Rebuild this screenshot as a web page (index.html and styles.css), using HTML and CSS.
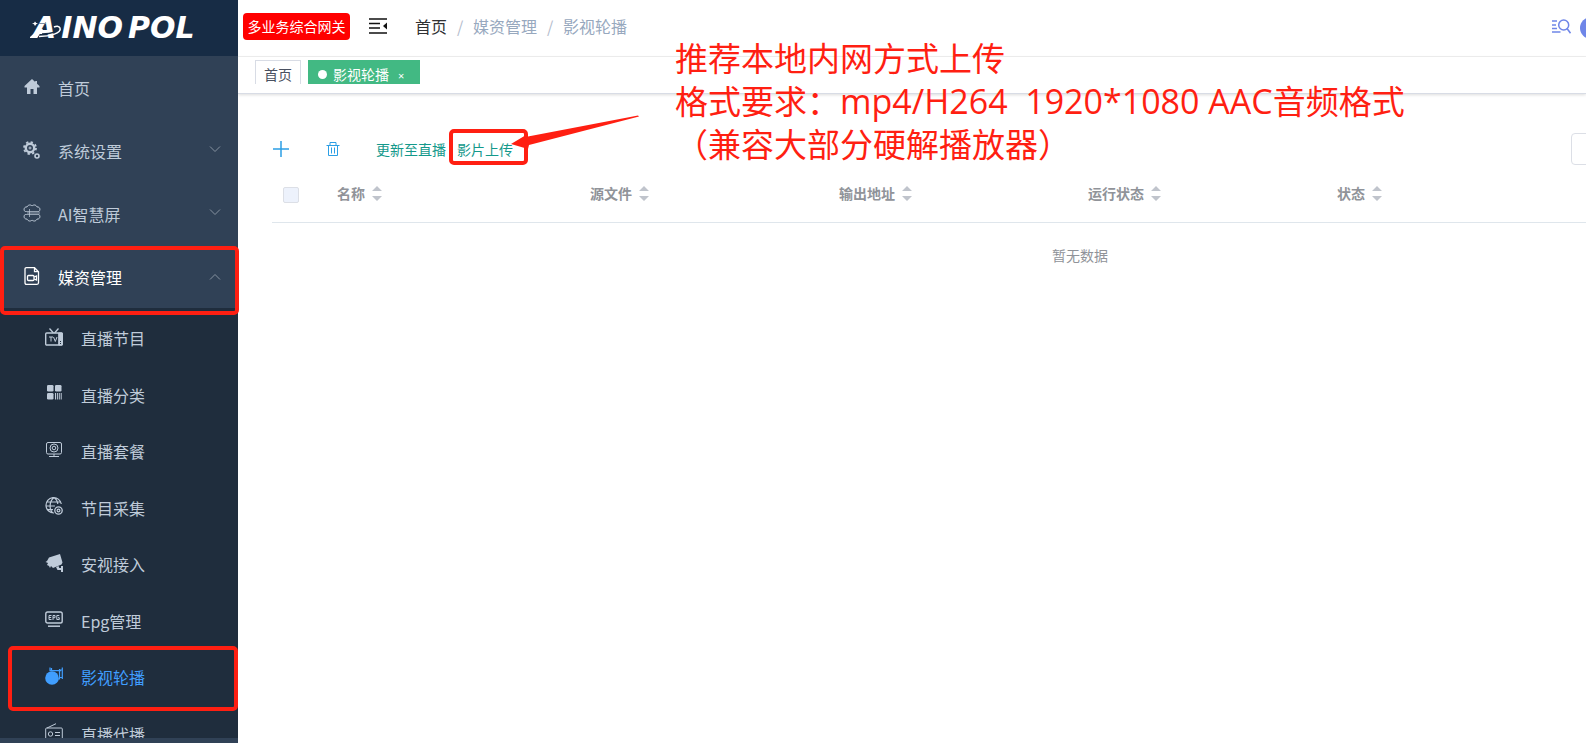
FILE: index.html
```html
<!DOCTYPE html>
<html lang="zh-CN">
<head>
<meta charset="utf-8">
<title>影视轮播</title>
<link rel="stylesheet" href="styles.css">
</head>
<body>
<div class="app">
  <aside class="sidebar">
    <div class="logo">
      <span>A</span><span>INO</span><span>POL</span>
      <svg class="logo-orbit" width="36" height="24" viewBox="0 0 36 24"><path d="M12 18C22 18 30 15 29 12" fill="none" stroke="#172c45" stroke-width="1.500"/><path d="M9 20.500C20 20.500 32 17 30 12C29 9.500 26 10 24 11" fill="none" stroke="#fff" stroke-width="1.500"/><path d="M5 5.500l1.200 1.500 1.800.5-1.800.7L5 10l-1-1.800-2-.7L4 7z" fill="#fff"/><path d="M9 7.500h7" stroke="#7f8fa3"/><path d="M-1 22L9 13h4l-6 9z" fill="#fff"/></svg>
    </div>
    <nav class="menu">
      <a class="item" href="#"><svg class="icon" viewBox="0 0 18 18"><path d="M9 1L1.500 8v1.500H4V16h3.500v-5h3v5H14V9.500h2.500V8L14 5.700V3h-1.800v1z" fill="currentColor"/></svg><span>首页</span></a>
      <a class="item" href="#"><svg class="icon" viewBox="0 0 18 18" fill="none" stroke="currentColor"><circle cx="7" cy="7" r="4.200" stroke-width="2.400"/><circle cx="7" cy="7" r="1"/><circle cx="7" cy="7" r="6" stroke-width="1.800" stroke-dasharray="2.350 2.350"/><circle cx="14" cy="15" r="2" stroke-width="1.600"/></svg><span>系统设置</span><svg class="chev" viewBox="0 0 12 8"><path d="M1 1.500l5 5 5-5"/></svg></a>
      <a class="item" href="#"><svg class="icon" viewBox="0 0 18 18" fill="none" stroke="currentColor"><path d="M2 7.500C0 5.500 1.500 2.500 4 3C5 .5 8 .5 9 2C10.500.5 13 .5 14 3C16.500 2.500 18 5.500 16 7.500M2 10.500C0 12.500 1.500 15.500 4 15C5 17.500 8 17.500 9 16C10.500 17.500 13 17.500 14 15C16.500 15.500 18 12.500 16 10.500"/><path d="M2 7.500h14M4 9h13M2 10.500h14M6.500 5v8" opacity=".7"/></svg><span>AI智慧屏</span><svg class="chev" viewBox="0 0 12 8"><path d="M1 1.500l5 5 5-5"/></svg></a>
      <a class="item open" href="#"><svg class="icon" viewBox="0 0 18 18" fill="none" stroke="currentColor" stroke-width="1.300"><path d="M3.500.7h8l4 4v11.100q0 1.500-1.500 1.500H3.500Q2 17.300 2 15.800V2.200Q2 .7 3.500.7zM11.500.7v4h4"/><rect x="4.500" y="8.500" width="6.500" height="5" rx="1"/><path d="M11 10l2.500-1v4L11 12"/></svg><span>媒资管理</span><svg class="chev" viewBox="0 0 12 8"><path d="M1 6.500l5-5 5 5"/></svg></a>
      <div class="submenu">
        <a class="item" href="#"><svg class="icon" viewBox="0 0 18 18" fill="none" stroke="currentColor"><path d="M4.500.5L8.500 5M13.500.5L9.500 5" stroke-width="1.300"/><rect x=".7" y="5" width="16.600" height="12" rx="1" stroke-width="1.400"/><path d="M13.700 5h3.600v12h-3.600z" fill="currentColor"/><path d="M4 9h4M6 9v4.500M8.500 9l1.800 4.500L12 9" stroke-width="1"/><path d="M15 13.500h1M15 15.500h1" stroke="#1f2d3d"/></svg><span>直播节目</span></a>
        <a class="item" href="#"><svg class="icon" viewBox="0 0 18 18" fill="currentColor"><rect x="2" y="1" width="6.500" height="6.500" rx="1.300"/><rect x="10" y="1" width="6.500" height="6.500" rx="1.300"/><rect x="2" y="9" width="6.500" height="6.500" rx="1.300"/><path d="M10 9h1v6.500h-1zm1.900 0h1v6.500h-1zm1.900 0h1v6.500h-1zm1.900 0h1v6.500h-1z"/></svg><span>直播分类</span></a>
        <a class="item" href="#"><svg class="icon" viewBox="0 0 18 18" fill="none" stroke="currentColor"><rect x="1.500" y="1.500" width="15" height="11.500" rx="1.500"/><circle cx="9" cy="7" r="4"/><circle cx="9" cy="7" r="1.800"/><path d="M9 13v2.500M4 15.500h10"/></svg><span>直播套餐</span></a>
        <a class="item" href="#"><svg class="icon" viewBox="0 0 18 18" fill="none" stroke="currentColor" stroke-width="1.200"><path d="M9 16A7.700 7.700 0 1 1 16.300 7M9 .7C4 4 4 13 8 16M9 .7c2.500 1.300 3.500 4 3.800 6.300M2 5h14M1 9h9M2 12.700h6"/><circle cx="13.500" cy="13.500" r="1.400"/><circle cx="13.500" cy="13.500" r="3.700" stroke-width="1.300"/></svg><span>节目采集</span></a>
        <a class="item" href="#"><svg class="icon" viewBox="0 0 18 18" fill="currentColor"><path d="M4 3.500L15 0l2.500 8.500-1 2L8 14 6 12l-1 2-1-2-2-1 1-2-2.500-1L2 7z"/><path d="M11 13l2.500-1 .8 2H16v-2h2v6h-2v-2h-3.500z"/></svg><span>安视接入</span></a>
        <a class="item" href="#"><svg class="icon" viewBox="0 0 18 18" fill="none" stroke="currentColor"><rect x=".8" y="2" width="16.400" height="11" rx="1.800" stroke-width="1.400"/><path d="M3 16.200h12" stroke-width="1.500"/><path d="M6.500 5.500H4v4h2.500M4 7.500h2.200M8 10V5.500h2v2.200H8M14.300 5.500h-2.500v4h2.500V7.700H13"/></svg><span>Epg管理</span></a>
        <a class="item current" href="#"><svg class="icon" viewBox="0 0 18 18" fill="none" stroke="currentColor" stroke-width="1.200"><circle cx="7" cy="11" r="6.800" fill="currentColor" stroke="none"/><path d="M5 4V.5M5 3.700h11M14.500 2v10H12M17.300 .5v11.500M14.500 3h2.500M14.500 10.500h2.500M6.500 1v3"/></svg><span>影视轮播</span></a>
        <a class="item" href="#"><svg class="icon" viewBox="0 0 18 18" fill="none" stroke="currentColor"><path d="M2 5L11 .7"/><rect x=".7" y="5" width="16.600" height="12" rx="1"/><circle cx="5.500" cy="11" r="2.200"/><path d="M10 9.500h5M10 12.500h5"/></svg><span>直播代播</span></a>
      </div>
    </nav>
    <div class="frame frame-menu"></div>
    <div class="frame frame-current"></div>
  </aside>

  <main class="main">
    <header class="topbar">
      <span class="badge">多业务综合网关</span>
      <button class="plain fold" aria-label="折叠菜单"><svg width="18" height="16" viewBox="0 0 18 16"><path d="M0 1h18M0 5.500h11M0 10h11M0 15h18" stroke="#111" stroke-width="1.700"/><path d="M18 4.500v7l-4-3.500z" fill="#111"/></svg></button>
      <nav class="crumbs"><a href="#">首页</a><i>/</i><span>媒资管理</span><i>/</i><span>影视轮播</span></nav>
      <button class="plain find" aria-label="搜索"><svg width="19" height="16" viewBox="0 0 19 16" fill="none" stroke="#6f86e8" stroke-width="1.500"><path d="M0 2h5M0 6h4M0 9.500h5M0 13h8.500"/><circle cx="11.700" cy="6" r="5"/><path d="M15 9.500l3.500 4.700"/></svg></button>
      <span class="avatar"></span>
    </header>
    <div class="tabs">
      <a class="tab" href="#">首页</a>
      <a class="tab active" href="#"><b class="dot"></b>影视轮播<small>×</small></a>
    </div>
    <section class="content">
      <div class="tools">
        <button class="plain add" aria-label="新增"><svg width="16" height="16" viewBox="0 0 16 16"><path d="M8 0v16M0 8h16" stroke="#2c9fe5" stroke-width="1.500"/></svg></button>
        <button class="plain del" aria-label="删除"><svg width="14" height="14" viewBox="0 0 14 14" fill="none" stroke="#2c9fe5"><path d="M.5 3.500h13M4 3V.5h6V3M2.500 3.500v10h9v-10M5.500 5.500v6M8.500 5.500v6"/></svg></button>
        <button class="plain link">更新至直播</button>
        <button class="plain link upload">影片上传</button>
        <button class="more" aria-label="更多"></button>
      </div>
      <table class="grid">
        <colgroup><col class="c-check"><col class="c-name"><col class="c-data"><col class="c-data"><col class="c-data"><col class="c-data"><col></colgroup>
        <thead><tr>
          <th><input type="checkbox" aria-label="全选"></th>
          <th>名称<svg class="sort" viewBox="0 0 10 16"><path d="M0 5l5-5 5 5zM0 10h10l-5 5z"/></svg></th>
          <th>源文件<svg class="sort" viewBox="0 0 10 16"><path d="M0 5l5-5 5 5zM0 10h10l-5 5z"/></svg></th>
          <th>输出地址<svg class="sort" viewBox="0 0 10 16"><path d="M0 5l5-5 5 5zM0 10h10l-5 5z"/></svg></th>
          <th>运行状态<svg class="sort" viewBox="0 0 10 16"><path d="M0 5l5-5 5 5zM0 10h10l-5 5z"/></svg></th>
          <th>状态<svg class="sort" viewBox="0 0 10 16"><path d="M0 5l5-5 5 5zM0 10h10l-5 5z"/></svg></th>
          <th></th>
        </tr></thead>
        <tbody><tr><td colspan="7">暂无数据</td></tr></tbody>
      </table>
    </section>
    <div class="frame frame-upload"></div>
    <svg class="arrow" width="130" height="36" viewBox="0 0 130 36"><path d="M0 29L15 20 17 21.500 127 0.500 128 1.500 18 30 17 34z" fill="#ff1f12"/></svg>
    <p class="note">推荐本地内网方式上传<br>格式要求：<span class="latin">mp4/H264&nbsp; 1920*1080 AAC</span>音频格式<br>（兼容大部分硬解播放器）</p>
  </main>
</div>
</body>
</html>
```
FILE: styles.css
```css
* { box-sizing: border-box; }
body { margin: 0; font-family: "Noto Sans CJK SC", sans-serif; font-size: 14px; background: #fff; }
a { color: inherit; text-decoration: none; }
.app { display: flex; height: 100vh; overflow: hidden; }
.sidebar { position: relative; display: flex; flex-direction: column; flex: 0 0 238px; padding-bottom: 5px; background: #304156; color: #bfcbd9; }
.logo { position: relative; display: flex; gap: 5px; flex: 0 0 56px; padding-left: 33px; line-height: 56px; background: #172c45; color: #fff; font-family: "DejaVu Sans", sans-serif; font-size: 30px; font-style: italic; font-weight: 700; }
.logo-orbit { position: absolute; left: 30px; top: 16px; }
.menu { flex: 1; min-height: 0; overflow: hidden; }
.item { display: flex; align-items: center; height: 63px; padding: 0 17px 0 23px; font-size: 16px; }
.item span { flex: 1; }
.icon { width: 18px; height: 18px; margin: 0 17px 2px 0; }
.chev { width: 12px; height: 8px; margin-bottom: 4px; fill: none; stroke: #8692a0; }
.open { color: #fff; }
.open .chev { margin-bottom: 0; }
.submenu { display: grid; grid-auto-rows: 1fr; height: 454px; padding-top: 2px; background: #1f2d3d; }
.submenu .item { height: auto; padding-left: 45px; }
.submenu .icon { margin: 0 18px 3px 0; }
.current { color: #409eff; }
.frame { position: absolute; border: 4px solid #ff1f12; border-radius: 5px; }
.frame-menu { left: 0; top: 246px; width: 239px; height: 69px; z-index: 1; }
.frame-current { left: 8px; right: 0; top: 646px; height: 65px; }
.main { position: relative; flex: 1; min-width: 0; overflow: hidden; }
.plain { display: flex; padding: 0; border: 0; background: none; font: inherit; }
.topbar { display: flex; align-items: center; height: 57px; padding: 0 0 4px 5px; border-bottom: 1px solid #f0f0f0; overflow: hidden; }
.badge { padding: 0 4px; width: 107px; border-radius: 4px; background: #f00; color: #fff; line-height: 27px; text-align: center; white-space: nowrap; }
.fold { margin-left: 19px; }
.crumbs { display: flex; margin-left: 28px; font-size: 16px; line-height: 24px; color: #97a8be; }
.crumbs a { color: #303133; }
.crumbs i { width: 26px; text-align: center; font-style: normal; color: #b4bccc; }
.find { margin: 2px 0 0 auto; }
.avatar { flex: none; width: 22px; height: 22px; margin: 4px -16px 0 9px; border-radius: 50%; background: #6f86e8; }
.tabs { display: flex; gap: 7px; height: 37px; padding: 3px 17px 9px; border-bottom: 1px solid #d8dce5; box-shadow: 0 1px 3px #0002; }
.tab { display: flex; align-items: center; height: 24px; padding: 3px 8px 0; border: 1px solid #d8dce5; border-bottom: 0; color: #495060; line-height: 20px; }
.active { border-color: #42b983; background: #42b983; color: #fff; }
.dot { width: 9px; height: 9px; margin: 1px 6px 0 1px; border-radius: 50%; background: #fff; }
.tab small { margin: 3px 7px 0 9px; font-family: "Noto Sans", sans-serif; font-size: 11px; line-height: 16px; }
.content { padding: 39px 0 0 34px; }
.tools { display: flex; align-items: center; height: 32px; }
.add { margin-left: 1px; }
.del { margin-left: 37px; }
.link { margin-left: 36px; color: #13998b; }
.upload { margin-left: 11px; }
.more { flex: none; width: 32px; height: 32px; margin: 0 -17px 0 auto; border: 1px solid #dcdfe6; border-radius: 4px; background: #fff; }
.grid { width: 1616px; table-layout: fixed; border-collapse: collapse; }
.c-check { width: 55px; }
.c-name { width: 253px; }
.c-data { width: 249px; }
.grid th { height: 57px; padding: 0 10px; border-bottom: 1px solid #dfe6ec; color: #909399; text-align: left; line-height: 20px; }
.grid td { height: 66px; padding: 0; color: #909399; text-align: center; }
.grid input { display: block; width: 16px; height: 16px; margin: 3px 0 0 1px; appearance: none; border: 1px solid #dcdfe6; border-radius: 2px; background: #edf2fc; }
.sort { width: 10px; height: 16px; margin-left: 7px; vertical-align: -3px; fill: #c0c4cc; }
.frame-upload { left: 211px; top: 129px; width: 79px; height: 36px; }
.arrow { position: absolute; left: 273px; top: 115px; }
.note { position: absolute; left: 437px; top: 36px; margin: 0; color: #ff1f12; font-size: 33px; line-height: 43px; white-space: nowrap; }
.latin { font-family: "Open Sans", sans-serif; font-size: 34px; line-height: 1; }
```
